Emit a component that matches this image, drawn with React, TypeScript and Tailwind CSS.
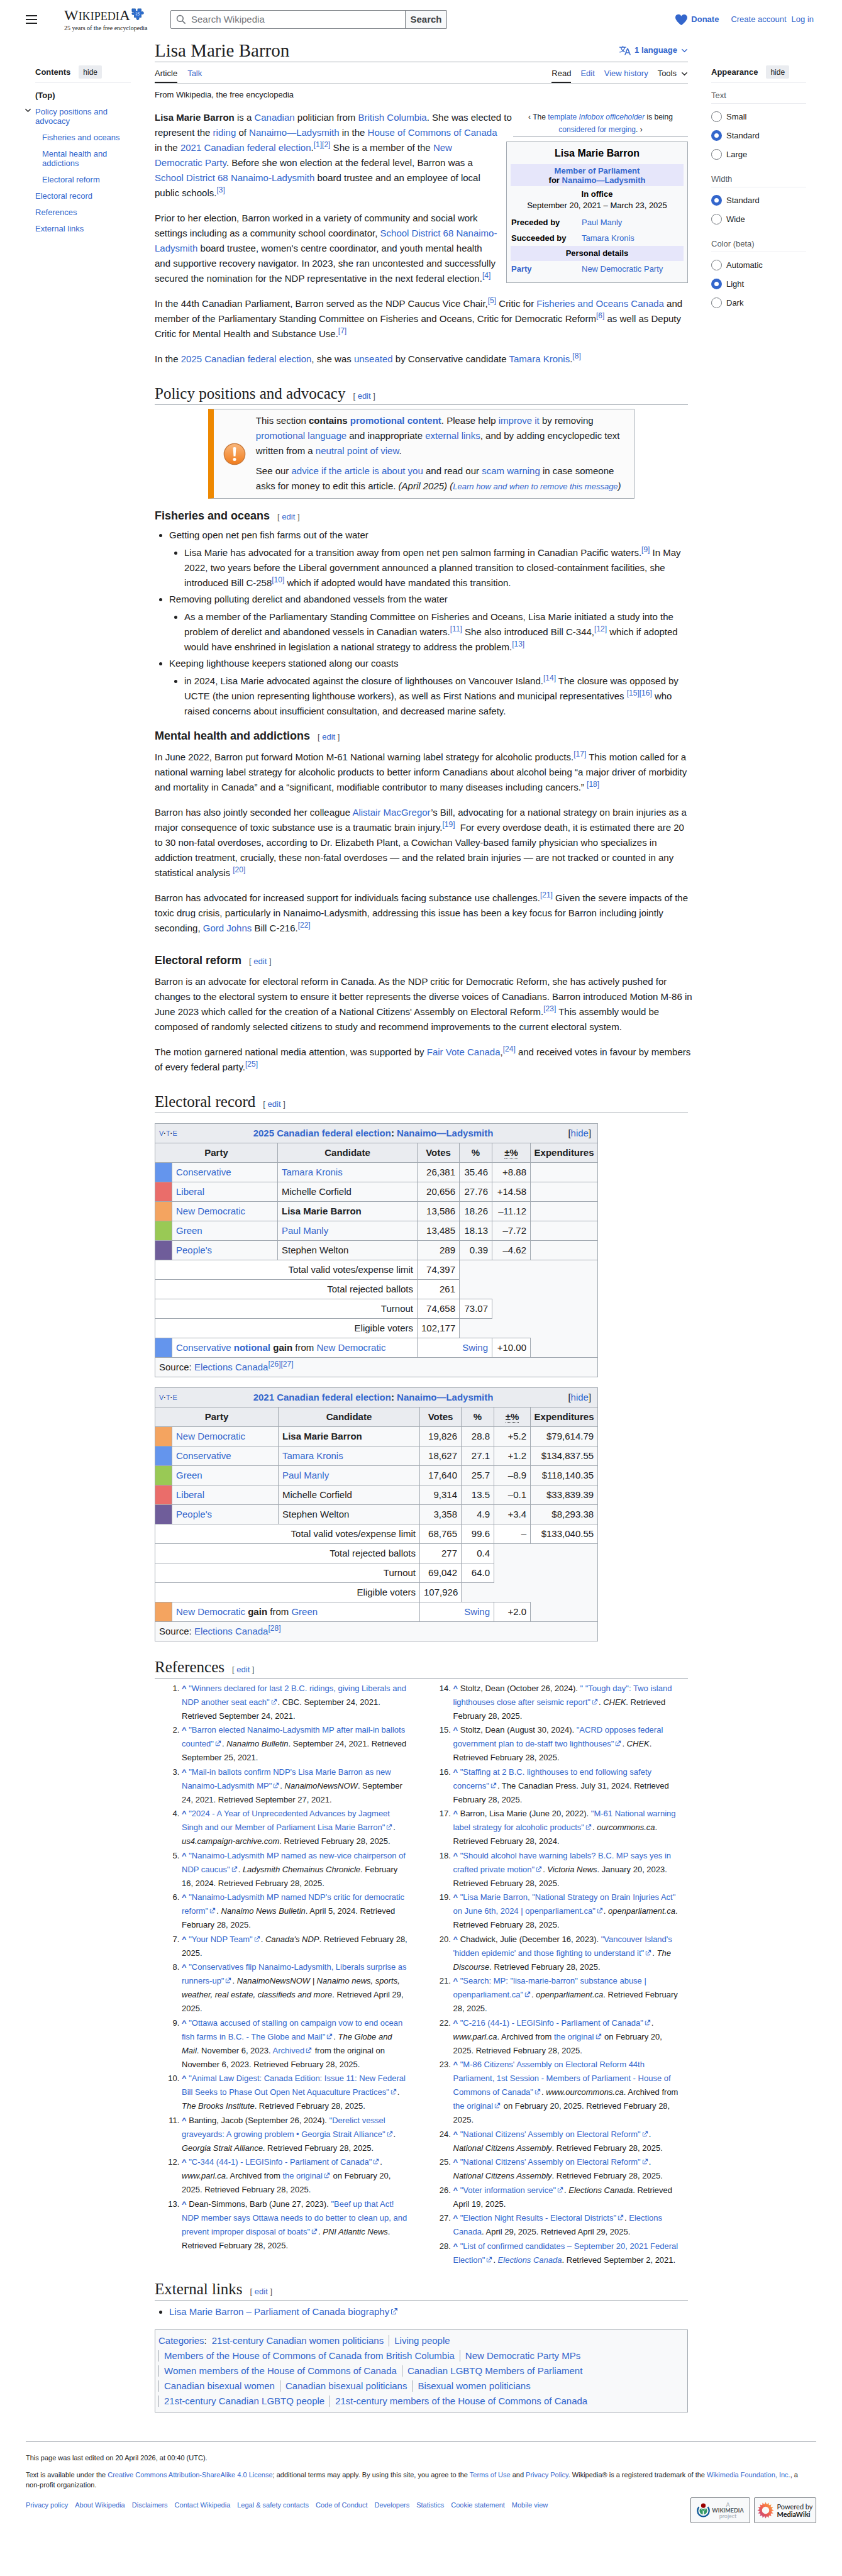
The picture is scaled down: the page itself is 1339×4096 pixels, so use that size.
import { ReactNode } from 'react';

const TOC_CHILDREN = ['Fisheries and oceans', 'Mental health and addictions', 'Electoral reform'];

const APPEARANCE = [
  { name: 'Text', options: ['Small', 'Standard', 'Large'], value: 'Standard' },
  { name: 'Width', options: ['Standard', 'Wide'], value: 'Standard' },
  { name: 'Color (beta)', options: ['Automatic', 'Light', 'Dark'], value: 'Light' },
];

const CATEGORIES = [
  '21st-century Canadian women politicians',
  'Living people',
  'Members of the House of Commons of Canada from British Columbia',
  'New Democratic Party MPs',
  'Women members of the House of Commons of Canada',
  'Canadian LGBTQ Members of Parliament',
  'Canadian bisexual women',
  'Canadian bisexual politicians',
  'Bisexual women politicians',
  '21st-century Canadian LGBTQ people',
  '21st-century members of the House of Commons of Canada',
];

const FOOTER_LINKS = [
  'Privacy policy', 'About Wikipedia', 'Disclaimers', 'Contact Wikipedia', 'Legal & safety contacts',
  'Code of Conduct', 'Developers', 'Statistics', 'Cookie statement', 'Mobile view',
];

function A({ children, className = '' }: { children: ReactNode; className?: string }) {
  return <a href="#" className={`text-[#3366cc] hover:underline ${className}`}>{children}</a>;
}

function ExtIcon({ className = 'w-[10px] h-[10px]' }: { className?: string }) {
  return (
    <svg viewBox="0 0 12 12" className={`inline-block align-baseline ml-[2px] mr-px ${className}`} fill="#3366cc" aria-hidden="true">
      <path d="M6 1h5v5L8.86 3.85 4.7 8 4 7.3l4.15-4.16zM2 3h2v1H2v6h6V8h1v2a1 1 0 0 1-1 1H2a1 1 0 0 1-1-1V4a1 1 0 0 1 1-1" />
    </svg>
  );
}

function X({ children }: { children: ReactNode }) {
  return <A>{children}<ExtIcon /></A>;
}

function Cite({ n }: { n: number }) {
  return <sup className="text-[12px] whitespace-nowrap"><A>[{n}]</A></sup>;
}

function Chevron({ className = '' }: { className?: string }) {
  return (
    <svg viewBox="0 0 12 12" className={`w-[11px] h-[11px] shrink-0 ${className}`} fill="none" stroke="currentColor" strokeWidth="1.5" aria-hidden="true">
      <path d="M1.5 3.5 6 8l4.5-4.5" />
    </svg>
  );
}

function EditLink() {
  return (
    <span className="ml-3 text-[13px] font-normal text-[#54595d] [font-family:'Liberation_Sans',Arial,sans-serif]">
      [ <A>edit</A> ]
    </span>
  );
}

function H2({ children }: { children: ReactNode }) {
  return (
    <div className="pt-[9px]">
      <h2 className="h-9 leading-[35px] border-b border-[#a2a9b1] text-[25px] [font-family:'Liberation_Serif',Georgia,serif]">
        {children}<EditLink />
      </h2>
    </div>
  );
}

function H3({ children }: { children: ReactNode }) {
  return <h3 className="pt-[9px] text-lg leading-[29px] font-bold">{children}<EditLink /></h3>;
}

function Header() {
  return (
    <header className="flex items-center h-[62px]">
      <button aria-label="Main menu" className="w-[61px] h-8 flex items-center">
        <svg viewBox="0 0 18 14" className="w-[18px] h-[14px]" fill="#202122">
          <path d="M0 0h18v2H0zM0 6h18v2H0zM0 12h18v2H0z" />
        </svg>
      </button>
      <a href="#" className="w-[169px] block [font-family:'Liberation_Serif',Georgia,serif] text-[#202122]">
        <span className="flex items-start h-[23px]">
          <span className="text-2xl leading-6">W<span className="text-lg leading-6">IKIPEDI</span>A</span>
          <svg viewBox="0 0 22 22" className="w-5 h-5 mt-px ml-[2px]" aria-hidden="true">
            <path fill="#2f6fd0" stroke="#0d4a9c" strokeWidth=".8" d="M1 1h6c.4 1.6.6 2.2 0 3.2 1.4 1.6 3.6 1.2 4-.4C11.3 3 10.6 2 11 1h6v5.5c1.2.3 2-.6 3-.3 1.8.8 1.8 3.6 0 4.3-1 .3-1.8-.5-3-.2V16h-4c-.5 1 .5 1.8.2 3-.6 1.9-3.6 1.9-4.3 0-.3-1.1.6-2 .1-3H5v-4.6c-1-.5-1.7.4-2.8.1-1.7-.7-1.7-3.3 0-3.9C3.3 7.3 4 8.2 5 7.6V6H1z" />
            <path fill="none" stroke="#cfe0f8" strokeWidth="1" d="M7.5 8.5c.8-1.5 3-.8 2.2.9L7.6 12h3M14.5 7.5h-2.3l-.2 2c2.6-.6 3.3 2.6.8 2.9h-1" />
          </svg>
        </span>
        <span className="block text-[10px] leading-3 mt-1">25 years of the free encyclopedia</span>
      </a>
      <form className="flex w-[440px] h-[30px]" onSubmit={(e) => e.preventDefault()}>
        <div className="flex-1 flex items-center gap-2 px-2 border border-[#72777d] rounded-l-[2px]">
          <svg viewBox="0 0 20 20" className="w-4 h-4 shrink-0" fill="#72777d" aria-hidden="true">
            <path d="M12.2 13.6a7 7 0 1 1 1.4-1.4l5.4 5.4-1.4 1.4zM3 8a5 5 0 1 0 10 0A5 5 0 0 0 3 8" />
          </svg>
          <input type="search" aria-label="Search Wikipedia" placeholder="Search Wikipedia" className="flex-1 min-w-0 text-[15px] outline-none placeholder:text-[#72777d]" />
        </div>
        <button type="submit" className="w-[67px] -ml-px border border-[#72777d] rounded-r-[2px] bg-[#f8f9fa] text-[15px] font-bold text-[#404244]">Search</button>
      </form>
      <nav aria-label="Personal tools" className="ml-auto mr-1 flex items-center text-[13px]">
        <a href="#" className="flex items-center gap-[6px] font-bold text-[#3366cc] mr-[19px]">
          <svg viewBox="0 0 20 20" className="w-[19px] h-[19px]" fill="#3366cc" aria-hidden="true">
            <path d="M14.75 1A5.24 5.24 0 0 0 10 4 5.24 5.24 0 0 0 0 6.25C0 11.75 10 19 10 19s10-7.25 10-12.75A5.25 5.25 0 0 0 14.75 1" />
          </svg>
          Donate
        </a>
        <A className="mr-2">Create account</A>
        <A>Log in</A>
      </nav>
    </header>
  );
}

function SideHeading({ children }: { children: ReactNode }) {
  return (
    <div className="mt-[42px] pb-[6px] border-b border-[#eaecf0]">
      <div className="flex items-center gap-[13px] h-[21px]">
        <h2 className="font-bold">{children}</h2>
        <button className="h-[21px] px-[7px] bg-[#eaecf0] rounded-[2px] text-xs text-[#202122]">hide</button>
      </div>
    </div>
  );
}

function Contents() {
  return (
    <nav aria-label="Contents" className="pl-[15px] pr-[38px] text-[13px] leading-[15px]">
      <SideHeading>Contents</SideHeading>
      <ul className="pt-3 flex flex-col gap-[11px]">
        <li><a href="#" className="font-bold">(Top)</a></li>
        <li>
          <div className="flex items-start -ml-[17px]">
            <button aria-label="Toggle Policy positions and advocacy subsection" className="w-[17px] shrink-0">
              <Chevron />
            </button>
            <A>Policy positions and advocacy</A>
          </div>
          <ul className="pl-[11px] pt-[11px] flex flex-col gap-[11px]">
            {TOC_CHILDREN.map((t) => <li key={t}><A>{t}</A></li>)}
          </ul>
        </li>
        <li><A>Electoral record</A></li>
        <li><A>References</A></li>
        <li><A>External links</A></li>
      </ul>
    </nav>
  );
}

function Appearance() {
  return (
    <aside className="pl-[37px] pr-4 text-[13px] leading-[15px]">
      <SideHeading>Appearance</SideHeading>
      {APPEARANCE.map((g, i) => (
        <fieldset key={g.name} className={i === 0 ? 'mt-3' : 'mt-[23px]'}>
          <legend className="w-full pb-[5px] border-b border-[#eaecf0] text-[#54595d]">{g.name}</legend>
          <div className="pt-3 flex flex-col gap-[13px]">
            {g.options.map((o) => (
              <label key={o} className="flex items-center gap-[7px] h-[17px]">
                <input
                  type="radio"
                  name={g.name}
                  defaultChecked={o === g.value}
                  className="appearance-none w-[17px] h-[17px] rounded-full border border-[#72777d] bg-white checked:border-[5px] checked:border-[#3366cc]"
                />
                {o}
              </label>
            ))}
          </div>
        </fieldset>
      ))}
    </aside>
  );
}

function Infobox() {
  return (
    <table
      aria-label="Lisa Marie Barron"
      className="float-right clear-right w-[289px] ml-[11px] mt-[7px] mb-[7px] border border-[#a2a9b1] bg-[#f8f9fa] text-[13px] text-black border-separate border-spacing-x-[6px] border-spacing-y-0"
    >
      <tbody>
        <tr><th colSpan={2} className="h-[35px] text-base">Lisa Marie Barron</th></tr>
        <tr>
          <th colSpan={2} className="h-[35px] bg-[#e6e6fa] leading-[15px]">
            <A>Member of Parliament</A><br />for <A>Nanaimo—Ladysmith</A>
          </th>
        </tr>
        <tr><th colSpan={2} className="pt-[5px] leading-4">In office</th></tr>
        <tr><td colSpan={2} className="pb-[5px] leading-[19px] text-center">September 20, 2021 – March 23, 2025</td></tr>
        <tr className="h-[25px]"><th className="pl-px text-left w-[107px]">Preceded by</th><td><A>Paul Manly</A></td></tr>
        <tr className="h-[25px]"><th className="pl-px text-left">Succeeded by</th><td><A>Tamara Kronis</A></td></tr>
        <tr><th colSpan={2} className="h-[21px] bg-[#e6e6fa]">Personal details</th></tr>
        <tr className="h-[26px]"><th className="pl-px text-left"><A>Party</A></th><td><A>New Democratic Party</A></td></tr>
        <tr><td colSpan={2} className="h-2"></td></tr>
      </tbody>
    </table>
  );
}

function PromoNotice() {
  return (
    <div role="note" className="mx-auto mt-[6px] mb-1 w-4/5 flex items-center border border-l-[9px] border-[#a2a9b1] border-l-[#ee8800] bg-[#fbfbfb] py-[6px]">
      <div className="w-[67px] shrink-0 flex justify-center">
        <svg viewBox="0 0 40 40" className="w-9 h-9" aria-hidden="true">
          <defs>
            <linearGradient id="warn" x1="0" y1="0" x2="0" y2="1">
              <stop offset="0" stopColor="#f9b77c" />
              <stop offset="1" stopColor="#f17c1c" />
            </linearGradient>
          </defs>
          <circle cx="20" cy="20" r="18.5" fill="url(#warn)" stroke="#c77839" strokeWidth="1.5" />
          <path d="M17.3 8.5q2.7-1.5 5.4 0l-1 15.5h-3.4z" fill="#fff" />
          <circle cx="20" cy="29.5" r="2.8" fill="#fff" />
        </svg>
      </div>
      <div>
        <div>
          This section <b>contains <A>promotional content</A></b>. Please help <A>improve it</A> by removing <A>promotional language</A> and
          inappropriate <A>external links</A>, and by adding encyclopedic text written from a <A>neutral point of view</A>.
        </div>
        <div className="mt-2">
          See our <A>advice if the article is about you</A> and read our <A>scam warning</A> in case someone asks for money to edit this
          article. <i>(April 2025)</i> <i>(<A className="text-[13px]">Learn how and when to remove this message</A>)</i>
        </div>
      </div>
    </div>
  );
}

const SWATCH: Record<string, string> = {
  Conservative: 'bg-[#6495ed]',
  Liberal: 'bg-[#ea6d6a]',
  'New Democratic': 'bg-[#f4a460]',
  Green: 'bg-[#99c955]',
  "People's": 'bg-[#6f5d9a]',
};

const LINKED = ['Tamara Kronis', 'Paul Manly'];

interface Election {
  year: number;
  widths: string[];
  rows: string[][];
  totals: string[][];
  winner: string;
  result: ReactNode;
  swing: string;
  source: number[];
}

const ELECTIONS: Election[] = [
  {
    year: 2025,
    widths: ['w-[27px]', 'w-[168px]', 'w-[222px]', 'w-[67px]', 'w-[52px]', 'w-[61px]', 'w-[107px]'],
    rows: [
      ['Conservative', 'Tamara Kronis', '26,381', '35.46', '+8.88', ''],
      ['Liberal', 'Michelle Corfield', '20,656', '27.76', '+14.58', ''],
      ['New Democratic', 'Lisa Marie Barron', '13,586', '18.26', '–11.12', ''],
      ['Green', 'Paul Manly', '13,485', '18.13', '–7.72', ''],
      ["People's", 'Stephen Welton', '289', '0.39', '–4.62', ''],
    ],
    totals: [
      ['Total valid votes/expense limit', '74,397'],
      ['Total rejected ballots', '261'],
      ['Turnout', '74,658', '73.07'],
      ['Eligible voters', '102,177'],
    ],
    winner: 'Conservative',
    result: <><A>Conservative</A> <b><A>notional</A> gain</b> from <A>New Democratic</A></>,
    swing: '+10.00',
    source: [26, 27],
  },
  {
    year: 2021,
    widths: ['w-[27px]', 'w-[169px]', 'w-[225px]', 'w-[66px]', 'w-[52px]', 'w-[58px]', 'w-[107px]'],
    rows: [
      ['New Democratic', 'Lisa Marie Barron', '19,826', '28.8', '+5.2', '$79,614.79'],
      ['Conservative', 'Tamara Kronis', '18,627', '27.1', '+1.2', '$134,837.55'],
      ['Green', 'Paul Manly', '17,640', '25.7', '–8.9', '$118,140.35'],
      ['Liberal', 'Michelle Corfield', '9,314', '13.5', '–0.1', '$33,839.39'],
      ["People's", 'Stephen Welton', '3,358', '4.9', '+3.4', '$8,293.38'],
    ],
    totals: [
      ['Total valid votes/expense limit', '68,765', '99.6', '–', '$133,040.55'],
      ['Total rejected ballots', '277', '0.4'],
      ['Turnout', '69,042', '64.0'],
      ['Eligible voters', '107,926'],
    ],
    winner: 'New Democratic',
    result: <><A>New Democratic</A> <b>gain</b> from <A>Green</A></>,
    swing: '+2.0',
    source: [28],
  },
];

const CELL = 'border border-[#a2a9b1] px-[6px]';

function ElectionTable({ e }: { e: Election }) {
  return (
    <table className="table-fixed w-[704px] mt-4 border-collapse border border-[#a2a9b1] bg-[#f8f9fa] leading-5">
      <colgroup>{e.widths.map((w, i) => <col key={i} className={w} />)}</colgroup>
      <tbody>
        <tr className="h-[31px] bg-[#eaecf0]">
          <th colSpan={7} className={CELL}>
            <div className="flex items-center">
              <span className="w-12 text-left text-[11px] font-normal"><A>V</A><b>·</b><A>T</A><b>·</b><A>E</A></span>
              <span className="flex-1"><A>{e.year} Canadian federal election</A>: <A>Nanaimo—Ladysmith</A></span>
              <button className="w-[58px] pr-1 text-right font-normal">[<span className="text-[#3366cc]">hide</span>]</button>
            </div>
          </th>
        </tr>
        <tr className="h-[31px] bg-[#eaecf0]">
          <th colSpan={2} className={CELL}>Party</th>
          <th className={CELL}>Candidate</th>
          <th className={CELL}>Votes</th>
          <th className={CELL}>%</th>
          <th className={CELL}><abbr title="Change in percentage" className="no-underline border-b border-dotted border-[#202122]">±%</abbr></th>
          <th className="border border-[#a2a9b1]">Expenditures</th>
        </tr>
        {e.rows.map(([party, name, ...nums]) => (
          <tr key={party} className="h-[31px]">
            <td className={`border border-[#a2a9b1] ${SWATCH[party]}`}></td>
            <td className={CELL}><A>{party}</A></td>
            <td className={CELL}>
              {LINKED.includes(name) ? <A>{name}</A> : name === 'Lisa Marie Barron' ? <b>{name}</b> : name}
            </td>
            {nums.map((n, i) => <td key={i} className={`${CELL} text-right`}>{n}</td>)}
          </tr>
        ))}
        {e.totals.map(([label, ...nums]) => (
          <tr key={label} className="h-[31px]">
            <td colSpan={3} className={`${CELL} bg-white text-right`}>{label}</td>
            {nums.map((n, i) => <td key={i} className={`${CELL} bg-white text-right`}>{n}</td>)}
          </tr>
        ))}
        <tr className="h-[31px]">
          <td className={`border border-[#a2a9b1] ${SWATCH[e.winner]}`}></td>
          <td colSpan={2} className={`${CELL} bg-white`}>{e.result}</td>
          <td colSpan={2} className={`${CELL} bg-white text-right`}><A>Swing</A></td>
          <td className={`${CELL} bg-white text-right`}>{e.swing}</td>
        </tr>
        <tr className="h-[31px]">
          <td colSpan={7} className={CELL}>Source: <A>Elections Canada</A>{e.source.map((n) => <Cite key={n} n={n} />)}</td>
        </tr>
      </tbody>
    </table>
  );
}

const REFS_LEFT: ReactNode[] = [
  <><X>"Winners declared for last 2 B.C. ridings, giving Liberals and NDP another seat each"</X>. CBC. September 24, 2021. Retrieved September 24, 2021.</>,
  <><X>"Barron elected Nanaimo-Ladysmith MP after mail-in ballots counted"</X>. <i>Nanaimo Bulletin</i>. September 24, 2021. Retrieved September 25, 2021.</>,
  <><X>"Mail-in ballots confirm NDP's Lisa Marie Barron as new Nanaimo-Ladysmith MP"</X>. <i>NanaimoNewsNOW</i>. September 24, 2021. Retrieved September 27, 2021.</>,
  <><X>"2024 - A Year of Unprecedented Advances by Jagmeet Singh and our Member of Parliament Lisa Marie Barron"</X>. <i>us4.campaign-archive.com</i>. Retrieved February 28, 2025.</>,
  <><X>"Nanaimo-Ladysmith MP named as new-vice chairperson of NDP caucus"</X>. <i>Ladysmith Chemainus Chronicle</i>. February 16, 2024. Retrieved February 28, 2025.</>,
  <><X>"Nanaimo-Ladysmith MP named NDP's critic for democratic reform"</X>. <i>Nanaimo News Bulletin</i>. April 5, 2024. Retrieved February 28, 2025.</>,
  <><X>"Your NDP Team"</X>. <i>Canada's NDP</i>. Retrieved February 28, 2025.</>,
  <><X>"Conservatives flip Nanaimo-Ladysmith, Liberals surprise as runners-up"</X>. <i>NanaimoNewsNOW | Nanaimo news, sports, weather, real estate, classifieds and more</i>. Retrieved April 29, 2025.</>,
  <><X>"Ottawa accused of stalling on campaign vow to end ocean fish farms in B.C. - The Globe and Mail"</X>. <i>The Globe and Mail</i>. November 6, 2023. <X>Archived</X> from the original on November 6, 2023. Retrieved February 28, 2025.</>,
  <><X>"Animal Law Digest: Canada Edition: Issue 11: New Federal Bill Seeks to Phase Out Open Net Aquaculture Practices"</X>. <i>The Brooks Institute</i>. Retrieved February 28, 2025.</>,
  <>Banting, Jacob (September 26, 2024). <X>"Derelict vessel graveyards: A growing problem • Georgia Strait Alliance"</X>. <i>Georgia Strait Alliance</i>. Retrieved February 28, 2025.</>,
  <><X>"C-344 (44-1) - LEGISinfo - Parliament of Canada"</X>. <i>www.parl.ca</i>. Archived from <X>the original</X> on February 20, 2025. Retrieved February 28, 2025.</>,
  <>Dean-Simmons, Barb (June 27, 2023). <X>"Beef up that Act! NDP member says Ottawa needs to do better to clean up, and prevent improper disposal of boats"</X>. <i>PNI Atlantic News</i>. Retrieved February 28, 2025.</>,
];

const REFS_RIGHT: ReactNode[] = [
  <>Stoltz, Dean (October 26, 2024). <X>" "Tough day": Two island lighthouses close after seismic report"</X>. <i>CHEK</i>. Retrieved February 28, 2025.</>,
  <>Stoltz, Dean (August 30, 2024). <X>"ACRD opposes federal government plan to de-staff two lighthouses"</X>. <i>CHEK</i>. Retrieved February 28, 2025.</>,
  <><X>"Staffing at 2 B.C. lighthouses to end following safety concerns"</X>. The Canadian Press. July 31, 2024. Retrieved February 28, 2025.</>,
  <>Barron, Lisa Marie (June 20, 2022). <X>"M-61 National warning label strategy for alcoholic products"</X>. <i>ourcommons.ca</i>. Retrieved February 28, 2024.</>,
  <><X>"Should alcohol have warning labels? B.C. MP says yes in crafted private motion"</X>. <i>Victoria News</i>. January 20, 2023. Retrieved February 28, 2025.</>,
  <><X>"Lisa Marie Barron, "National Strategy on Brain Injuries Act" on June 6th, 2024 | openparliament.ca"</X>. <i>openparliament.ca</i>. Retrieved February 28, 2025.</>,
  <>Chadwick, Julie (December 16, 2023). <X>"Vancouver Island's 'hidden epidemic' and those fighting to understand it"</X>. <i>The Discourse</i>. Retrieved February 28, 2025.</>,
  <><X>"Search: MP: "lisa-marie-barron" substance abuse | openparliament.ca"</X>. <i>openparliament.ca</i>. Retrieved February 28, 2025.</>,
  <><X>"C-216 (44-1) - LEGISinfo - Parliament of Canada"</X>. <i>www.parl.ca</i>. Archived from <X>the original</X> on February 20, 2025. Retrieved February 28, 2025.</>,
  <><X>"M-86 Citizens' Assembly on Electoral Reform 44th Parliament, 1st Session - Members of Parliament - House of Commons of Canada"</X>. <i>www.ourcommons.ca</i>. Archived from <X>the original</X> on February 20, 2025. Retrieved February 28, 2025.</>,
  <><X>"National Citizens' Assembly on Electoral Reform"</X>. <i>National Citizens Assembly</i>. Retrieved February 28, 2025.</>,
  <><X>"National Citizens' Assembly on Electoral Reform"</X>. <i>National Citizens Assembly</i>. Retrieved February 28, 2025.</>,
  <><X>"Voter information service"</X>. <i>Elections Canada</i>. Retrieved April 19, 2025.</>,
  <><X>"Election Night Results - Electoral Districts"</X>. <A>Elections Canada</A>. April 29, 2025. Retrieved April 29, 2025.</>,
  <><X>"List of confirmed candidates – September 20, 2021 Federal Election"</X>. <i><A>Elections Canada</A></i>. Retrieved September 2, 2021.</>,
];

function RefList({ items, start }: { items: ReactNode[]; start: number }) {
  return (
    <ol start={start} className="list-decimal pl-[43px] text-[13px] leading-[22px] [&>li:nth-child(even)]:mb-px">
      {items.map((r, i) => (
        <li key={i} className="pr-[11px]"><A className="font-bold">^</A> {r}</li>
      ))}
    </ol>
  );
}

function Article() {
  return (
    <div className="mt-[14px] text-[15px] leading-6 [&_p]:mb-4 [&_p]:-mr-[7px]">
      <div className="float-right w-[278px] py-px border-b border-[#a2a9b1] text-center text-xs leading-5">
        ‹ The <A>template <i>Infobox officeholder</i></A> is being <br /><A>considered for merging</A>. ›
      </div>
      <Infobox />
      <p>
        <b>Lisa Marie Barron</b> is a <A>Canadian</A> politician from <A>British Columbia</A>. She was elected to represent the <A>riding</A> of{' '}
        <A>Nanaimo—Ladysmith</A> in the <A>House of Commons of Canada</A> in the <A>2021 Canadian federal election</A>.<Cite n={1} /><Cite n={2} /> She
        is a member of the <A>New Democratic Party</A>. Before she won election at the federal level, Barron was a{' '}
        <A>School District 68 Nanaimo-Ladysmith</A> board trustee and an employee of local public schools.<Cite n={3} />
      </p>
      <p>
        Prior to her election, Barron worked in a variety of community and social work settings including as a community school
        coordinator, <A>School District 68 Nanaimo-Ladysmith</A> board trustee, women's centre coordinator, and youth mental health and
        supportive recovery navigator. In 2023, she ran uncontested and successfully secured the nomination for the NDP representative in
        the next federal election.<Cite n={4} />
      </p>
      <p>
        In the 44th Canadian Parliament, Barron served as the NDP Caucus Vice Chair,<Cite n={5} /> Critic for{' '}
        <A>Fisheries and Oceans Canada</A> and member of the Parliamentary Standing Committee on Fisheries and Oceans, Critic for
        Democratic Reform<Cite n={6} /> as well as Deputy Critic for Mental Health and Substance Use.<Cite n={7} />
      </p>
      <p>
        In the <A>2025 Canadian federal election</A>, she was <A>unseated</A> by Conservative candidate <A>Tamara Kronis</A>.<Cite n={8} />
      </p>

      <H2>Policy positions and advocacy</H2>
      <PromoNotice />

      <H3>Fisheries and oceans</H3>
      <ul className="mt-[3px] mb-1 list-disc pl-[23px] [&>li]:mb-[2px] [&_ul]:mt-1 [&_ul]:list-disc [&_ul]:pl-6 [&_ul]:-mr-[7px]">
        <li>
          Getting open net pen fish farms out of the water
          <ul>
            <li>
              Lisa Marie has advocated for a transition away from open net pen salmon farming in Canadian Pacific waters.<Cite n={9} /> In
              May 2022, two years before the Liberal government announced a planned transition to closed-containment facilities, she
              introduced Bill C-258<Cite n={10} /> which if adopted would have mandated this transition.
            </li>
          </ul>
        </li>
        <li>
          Removing polluting derelict and abandoned vessels from the water
          <ul>
            <li>
              As a member of the Parliamentary Standing Committee on Fisheries and Oceans, Lisa Marie initiated a study into the problem
              of derelict and abandoned vessels in Canadian waters.<Cite n={11} /> She also introduced Bill C-344,<Cite n={12} /> which if
              adopted would have enshrined in legislation a national strategy to address the problem.<Cite n={13} />
            </li>
          </ul>
        </li>
        <li>
          Keeping lighthouse keepers stationed along our coasts
          <ul>
            <li>
              in 2024, Lisa Marie advocated against the closure of lighthouses on Vancouver Island.<Cite n={14} /> The closure was opposed
              by UCTE (the union representing lighthouse workers), as well as First Nations and municipal representatives{' '}
              <Cite n={15} /><Cite n={16} /> who raised concerns about insufficient consultation, and decreased marine safety.
            </li>
          </ul>
        </li>
      </ul>

      <H3>Mental health and addictions</H3>
      <p className="mt-[6px]">
        In June 2022, Barron put forward Motion M-61 National warning label strategy for alcoholic products.<Cite n={17} /> This motion
        called for a national warning label strategy for alcoholic products to better inform Canadians about alcohol being “a major driver
        of morbidity and mortality in Canada” and a “significant, modifiable contributor to many diseases including cancers.” <Cite n={18} />
      </p>
      <p>
        Barron has also jointly seconded her colleague <A>Alistair MacGregor</A>’s Bill, advocating for a national strategy on brain
        injuries as a major consequence of toxic substance use is a traumatic brain injury.<Cite n={19} />&nbsp; For every overdose death,
        it is estimated there are 20 to 30 non-fatal overdoses, according to Dr. Elizabeth Plant, a Cowichan Valley-based family physician
        who specializes in addiction treatment, crucially, these non-fatal overdoses — and the related brain injuries — are not tracked or
        counted in any statistical analysis <Cite n={20} />
      </p>
      <p>
        Barron has advocated for increased support for individuals facing substance use challenges.<Cite n={21} /> Given the severe impacts
        of the toxic drug crisis, particularly in Nanaimo-Ladysmith, addressing this issue has been a key focus for Barron including
        jointly seconding, <A>Gord Johns</A> Bill C-216.<Cite n={22} />
      </p>

      <H3>Electoral reform</H3>
      <p className="mt-[6px]">
        Barron is an advocate for electoral reform in Canada. As the NDP critic for Democratic Reform, she has actively pushed for changes
        to the electoral system to ensure it better represents the diverse voices of Canadians. Barron introduced Motion M-86 in June 2023
        which called for the creation of a National Citizens' Assembly on Electoral Reform.<Cite n={23} /> This assembly would be composed
        of randomly selected citizens to study and recommend improvements to the current electoral system.
      </p>
      <p>
        The motion garnered national media attention, was supported by <A>Fair Vote Canada</A>,<Cite n={24} /> and received votes in favour
        by members of every federal party.<Cite n={25} />
      </p>

      <H2>Electoral record</H2>
      {ELECTIONS.map((e) => <ElectionTable key={e.year} e={e} />)}

      <div className="mt-[14px]">
        <H2>References</H2>
      </div>
      <div className="mt-[5px] mb-2 grid grid-cols-2 gap-[15px]">
        <RefList items={REFS_LEFT} start={1} />
        <RefList items={REFS_RIGHT} start={14} />
      </div>

      <H2>External links</H2>
      <ul className="mt-[6px] list-disc pl-[23px]">
        <li><A>Lisa Marie Barron – Parliament of Canada biography<ExtIcon className="w-3 h-3" /></A></li>
      </ul>

      <div className="mt-4 px-[5px] py-[5px] border border-[#a2a9b1] bg-[#f8f9fa]">
        <ul className="flex flex-wrap max-w-[760px] leading-[18px]">
          <li className="my-[3px] pr-2"><A>Categories</A>:</li>
          {CATEGORIES.map((c, i) => (
            <li key={c} className={`my-[3px] pr-2 ${i > 0 ? 'border-l border-[#a2a9b1] pl-2' : ''}`}><A>{c}</A></li>
          ))}
        </ul>
      </div>
    </div>
  );
}

function WikimediaLogo() {
  return (
    <svg viewBox="0 0 24 26" className="w-[21px] h-[23px]" aria-hidden="true">
      <path d="M4 7a10.5 10.5 0 1 0 16 0" fill="none" stroke="#0c5797" strokeWidth="2.6" />
      <path d="M6.5 9.5a7.2 7.2 0 0 0 4.5 11.3V14zM17.5 9.5A7.2 7.2 0 0 1 13 20.8V14z" fill="#339966" />
      <path d="M8 9q4 3 8 0l-3 5h-2z" fill="#339966" />
      <circle cx="12" cy="4.5" r="4.2" fill="#990000" />
    </svg>
  );
}

function MediaWikiLogo() {
  return (
    <svg viewBox="-14 -14 28 28" className="w-[27px] h-[27px]" aria-hidden="true">
      <defs>
        <linearGradient id="flower" x1="1" y1="0" x2="0" y2="1">
          <stop offset="0" stopColor="#fcb83a" />
          <stop offset=".5" stopColor="#f2604d" />
          <stop offset="1" stopColor="#b23a8e" />
        </linearGradient>
        <mask id="petals">
          {Array.from({ length: 16 }, (_, i) => (
            <path key={i} d="M-2.6-8 0-13.5 2.6-8z" fill="#fff" transform={`rotate(${i * 22.5})`} />
          ))}
          <circle r="8.2" fill="none" stroke="#fff" strokeWidth="4.5" />
        </mask>
      </defs>
      <rect x="-14" y="-14" width="28" height="28" fill="url(#flower)" mask="url(#petals)" />
    </svg>
  );
}

function Footer() {
  return (
    <footer className="mt-[46px] pt-[17px] border-t border-[#a2a9b1] text-[11px] leading-4">
      <p>This page was last edited on 20 April 2026, at 00:40 (UTC).</p>
      <p className="mt-[11px] pr-3">
        Text is available under the <A>Creative Commons Attribution-ShareAlike 4.0 License</A>; additional terms may apply. By using this site,
        you agree to the <A>Terms of Use</A> and <A>Privacy Policy</A>. Wikipedia® is a registered trademark of the <A>Wikimedia Foundation,
        Inc.</A>, a <span className="whitespace-nowrap">non-profit</span> organization.
      </p>
      <div className="mt-3 flex items-start justify-between">
        <ul className="mt-1 flex flex-wrap gap-x-[11px]">
          {FOOTER_LINKS.map((l) => <li key={l}><A>{l}</A></li>)}
        </ul>
        <div className="flex gap-[6px]">
          <a href="#" className="flex items-center justify-center gap-[3px] w-[95px] h-[41px] border border-[#72777d] rounded-[2px] bg-[#f8f9fa]">
            <WikimediaLogo />
            <span className="text-center text-[9px] leading-[9px] text-[#a2a9b1] [font-family:Lato,sans-serif]">
              A<br /><b className="text-[#54595d]">WIKIMEDIA</b><br />project
            </span>
          </a>
          <a href="#" className="flex items-center justify-center gap-1 w-[99px] h-[41px] border border-[#72777d] rounded-[2px] bg-[#f8f9fa]">
            <MediaWikiLogo />
            <span className="text-[11px] leading-3 whitespace-nowrap [font-family:Lato,sans-serif]">Powered by<br /><b>MediaWiki</b></span>
          </a>
        </div>
      </div>
    </footer>
  );
}

export default function App() {
  return (
    <div className="px-[41px] pb-[82px] bg-white text-[#202122] [font-family:'Liberation_Sans',Arial,sans-serif]">
      <Header />
      <div className="grid grid-cols-[205px_minmax(0,1fr)_204px]">
        <Contents />
        <main>
          <div className="flex items-center justify-between h-[37px] border-b border-[#a2a9b1]">
            <h1 className="text-[29px] leading-9 [font-family:'Liberation_Serif',Georgia,serif]">Lisa Marie Barron</h1>
            <button className="flex items-center gap-[6px] text-[13px] font-bold text-[#3366cc]">
              <svg viewBox="0 0 20 20" className="w-[18px] h-[18px]" fill="#3366cc" aria-hidden="true">
                <path d="M20 18h-1.44a.6.6 0 0 1-.4-.12.8.8 0 0 1-.23-.31L17 15h-5l-1 2.54a.8.8 0 0 1-.22.3.6.6 0 0 1-.4.14H9l4.55-11.47h1.89zm-3.53-4.31L14.89 9.5a12 12 0 0 1-.39-1.24q-.09.37-.19.69l-.19.56-1.58 4.19zm-6.3-1.58a13.4 13.4 0 0 1-2.91-1.41 11.46 11.46 0 0 0 2.81-5.37H12V4H7.31a4 4 0 0 0-.2-.56C6.87 2.79 6.6 2 6.6 2l-1.47.5s.4.89.6 1.5H0v1.33h2.15A11.23 11.23 0 0 0 5 10.7a17.2 17.2 0 0 1-5 2.1q.56.82.87 1.38a23.3 23.3 0 0 0 5.22-2.51 15.6 15.6 0 0 0 3.56 1.77zM3.63 5.33h4.91a8.1 8.1 0 0 1-2.45 4.45 9.1 9.1 0 0 1-2.46-4.45" />
              </svg>
              1 language
              <Chevron />
            </button>
          </div>
          <div className="flex justify-between h-[34px] border-b border-[#c8ccd1] text-[13px]">
            <nav aria-label="Namespaces" className="flex gap-4">
              <a href="#" className="pt-2 border-b-2 border-[#202122]">Article</a>
              <A className="pt-2">Talk</A>
            </nav>
            <nav aria-label="Views" className="flex gap-[15px]">
              <a href="#" className="pt-2 border-b-2 border-[#202122]">Read</a>
              <A className="pt-2">Edit</A>
              <A className="pt-2">View history</A>
              <button className="flex items-center gap-[7px] pt-[3px]">Tools <Chevron /></button>
            </nav>
          </div>
          <div className="mt-2 text-[13px] leading-5">From Wikipedia, the free encyclopedia</div>
          <Article />
        </main>
        <Appearance />
      </div>
      <Footer />
    </div>
  );
}
